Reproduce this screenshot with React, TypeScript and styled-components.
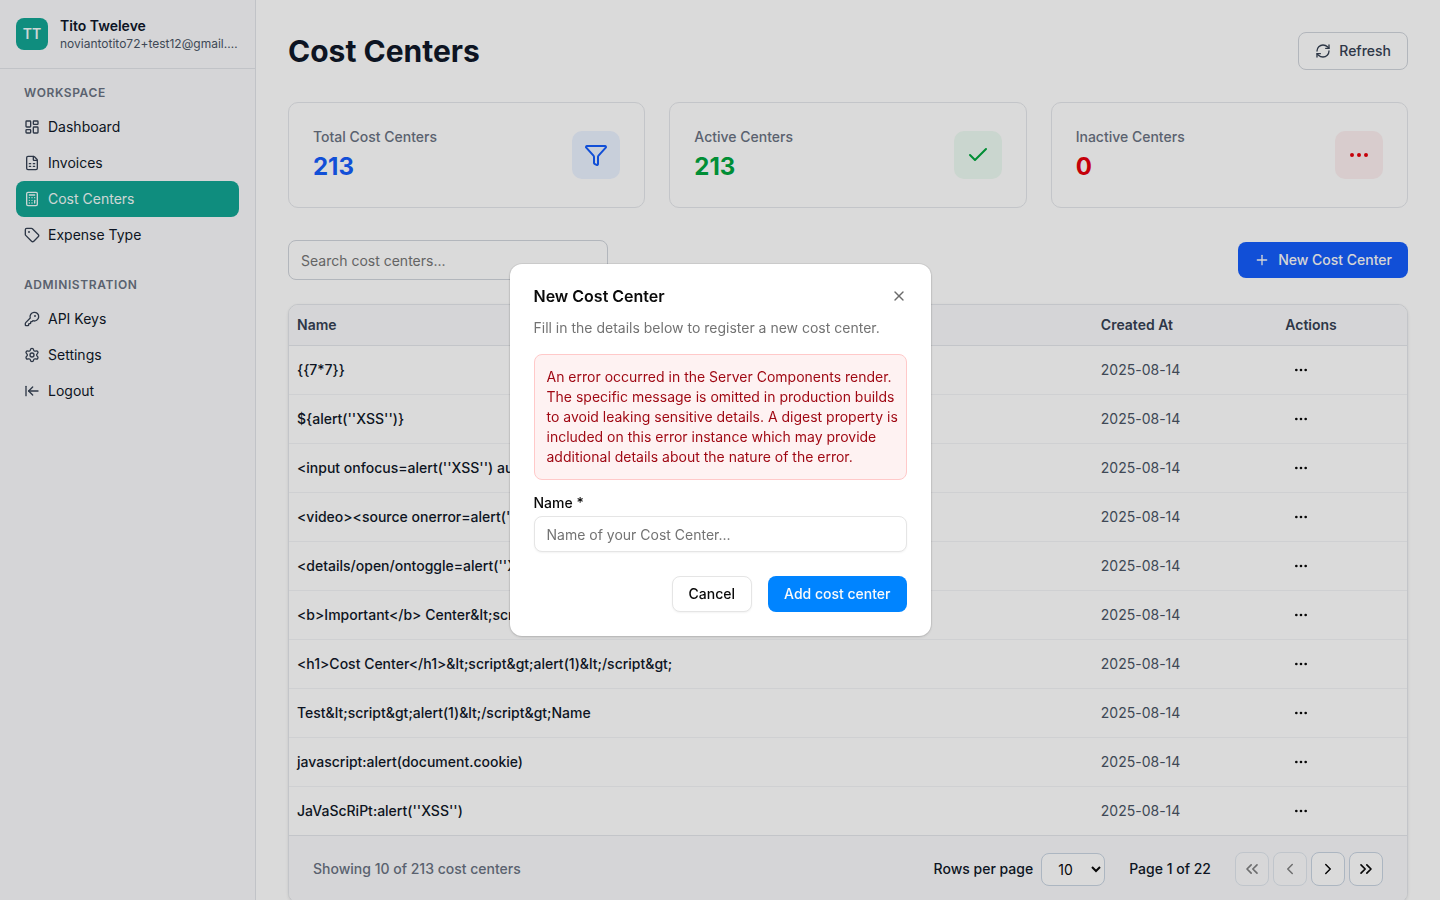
import React from "react";
import styled, { createGlobalStyle, css } from "styled-components";
import {
  ArrowLeftToLine,
  Calculator,
  Check,
  ChevronLeft,
  ChevronRight,
  ChevronsLeft,
  ChevronsRight,
  Ellipsis,
  FileSpreadsheet,
  Funnel,
  KeyRound,
  LayoutDashboard,
  Plus,
  RefreshCw,
  Settings,
  Tag,
  X,
} from "lucide-react";

const GlobalStyle = createGlobalStyle`
  *, *::before, *::after { box-sizing: border-box; }
  body {
    margin: 0;
    background: #fff;
    color: #0a0a0a;
    font-family: Inter, "Liberation Sans", sans-serif;
    font-feature-settings: "calt" 0;
    font-size: 14px;
    line-height: 20px;
    -webkit-font-smoothing: antialiased;
  }
  button, input, select { font: inherit; color: inherit; }
  button { cursor: pointer; }
  h1, h2, p, ul { margin: 0; padding: 0; }
  ul { list-style: none; }
  svg { flex-shrink: 0; display: block; }
`;

const Shell = styled.div`
  display: flex;
  height: 100vh;
  overflow: hidden;
`;

/* Sidebar */

const Sidebar = styled.aside`
  flex: 0 0 256px;
  min-width: 0;
  background: #f9fafc;
  border-right: 1px solid #e2e4e9;
`;

const Account = styled.div`
  display: flex;
  align-items: center;
  gap: 12px;
  padding: 16px;
  border-bottom: 1px solid #e2e4e9;
`;

const Avatar = styled.div`
  flex: 0 0 32px;
  height: 32px;
  display: grid;
  place-items: center;
  border-radius: 8px;
  background: #12a594;
  color: #f0fbf9;
  font-weight: 600;
`;

const AccountText = styled.div`
  min-width: 0;
`;

const AccountName = styled.p`
  color: #0f172b;
  font-weight: 600;
`;

const AccountEmail = styled.p`
  overflow: hidden;
  text-overflow: ellipsis;
  white-space: nowrap;
  color: #4a5565;
  font-size: 12px;
  line-height: 16px;
`;

const Nav = styled.nav`
  display: flex;
  flex-direction: column;
  gap: 24px;
  padding: 16px;
`;

const NavHeading = styled.h2`
  padding: 0 8px;
  margin-bottom: 8px;
  color: #6a7282;
  font-size: 12px;
  font-weight: 600;
  line-height: 16px;
  letter-spacing: 0.05em;
  text-transform: uppercase;
`;

const NavLink = styled.a<{ $active?: boolean }>`
  display: flex;
  align-items: center;
  gap: 8px;
  padding: 8px;
  border-radius: 8px;
  color: #101828;
  text-decoration: none;

  svg {
    color: #364153;
  }

  ${(p) =>
    p.$active &&
    css`
      background: #12a594;
      color: #f0fbf9;
      svg {
        color: #f0fbf9;
      }
    `}
`;

/* Page */

const Main = styled.main`
  flex: 1;
  min-width: 0;
  padding: 32px;
  overflow: hidden;
`;

const PageHeader = styled.header`
  display: flex;
  align-items: center;
  justify-content: space-between;
  margin-bottom: 32px;
`;

const PageTitle = styled.h1`
  color: #101828;
  font-size: 30px;
  line-height: 36px;
  font-weight: 700;
`;

const RefreshButton = styled.button`
  display: flex;
  align-items: center;
  gap: 8px;
  padding: 8px 16px;
  border: 1px solid #d1d5dc;
  border-radius: 8px;
  background: #fff;
  color: #364153;
  font-weight: 500;
`;

const Stats = styled.section`
  display: grid;
  grid-template-columns: repeat(3, 1fr);
  gap: 24px;
  margin-bottom: 32px;
`;

const StatCard = styled.div`
  display: flex;
  align-items: center;
  justify-content: space-between;
  padding: 24px;
  border: 1px solid #e5e7eb;
  border-radius: 10px;
  background: #fff;
`;

const StatLabel = styled.p`
  margin-bottom: 4px;
  color: #6a7282;
  font-weight: 500;
`;

const StatValue = styled.p<{ $color: string }>`
  color: ${(p) => p.$color};
  font-size: 24px;
  line-height: 32px;
  font-weight: 700;
`;

const StatIcon = styled.div<{ $color: string; $tint: string }>`
  display: grid;
  place-items: center;
  width: 48px;
  height: 48px;
  border-radius: 10px;
  background: ${(p) => p.$tint};
  color: ${(p) => p.$color};
`;

const Toolbar = styled.div`
  display: flex;
  align-items: center;
  justify-content: space-between;
  margin-bottom: 24px;
`;

const SearchInput = styled.input`
  width: 320px;
  height: 40px;
  padding: 0 12px;
  border: 1px solid #d1d5dc;
  border-radius: 8px;
  background: #fff;

  &::placeholder {
    color: #757575;
  }
`;

const NewButton = styled.button`
  display: flex;
  align-items: center;
  gap: 8px;
  height: 36px;
  padding: 0 16px;
  border: 0;
  border-radius: 8px;
  background: #155dfc;
  color: #fafafa;
  font-weight: 500;
`;

/* Table */

const TableCard = styled.section`
  overflow: hidden;
  border: 1px solid #e5e7eb;
  border-radius: 10px;
  background: #fff;
  box-shadow: 0 1px 3px rgba(0, 0, 0, 0.1);
`;

const Table = styled.table`
  width: 100%;
  table-layout: fixed;
  border-collapse: separate;
  border-spacing: 0;
`;

const HeadCell = styled.th<{ $width?: string }>`
  width: ${(p) => p.$width ?? "auto"};
  height: 41px;
  padding: 0 8px;
  border-bottom: 1px solid #e5e7eb;
  background: #f9fafc;
  color: #364153;
  font-weight: 600;
  text-align: left;
`;

const Cell = styled.td<{ $muted?: boolean }>`
  height: 49px;
  padding: 0 8px;
  border-bottom: 1px solid #f3f4f6;
  color: ${(p) => (p.$muted ? "#4a5565" : "#101828")};
  font-weight: ${(p) => (p.$muted ? 400 : 500)};
  white-space: nowrap;

  tr:last-child > & {
    border-bottom: 0;
    height: 48px;
  }
`;

const RowMenuButton = styled.button`
  display: grid;
  place-items: center;
  width: 32px;
  height: 32px;
  padding: 0;
  border: 0;
  border-radius: 6px;
  background: transparent;
  color: #0a0a0a;
`;

const TableFooter = styled.footer`
  display: flex;
  align-items: center;
  justify-content: space-between;
  padding: 16px 24px;
  border-top: 1px solid #e5e7eb;
  background: #f9fafc;
`;

const FooterNote = styled.p`
  color: #6a7282;
  font-weight: 500;
`;

const Pagination = styled.div`
  display: flex;
  align-items: center;
  gap: 24px;
  color: #101828;
  font-weight: 500;
`;

const RowsLabel = styled.label`
  display: flex;
  align-items: center;
  gap: 8px;
`;

const RowsSelect = styled.select`
  width: 64px;
  height: 33px;
  padding: 0 0 0 12px;
  border: 1px solid #cad5e2;
  border-radius: 8px;
  background: #fff;
  color: #0a0a0a;
  font-weight: 400;
`;

const PageButtons = styled.div`
  display: flex;
  gap: 4px;
`;

const PageButton = styled.button`
  display: grid;
  place-items: center;
  width: 34px;
  height: 34px;
  padding: 0;
  border: 1px solid #cad5e2;
  border-radius: 8px;
  background: #fff;
  color: #0a0a0a;

  &:disabled {
    opacity: 0.5;
  }
`;

/* Dialog */

const Overlay = styled.div`
  position: fixed;
  inset: 0;
  z-index: 10;
  display: flex;
  align-items: center;
  justify-content: center;
  background: rgba(0, 0, 0, 0.145);
`;

const Dialog = styled.div`
  width: 421px;
  padding: 24px;
  border-radius: 12px;
  background: #fff;
  box-shadow: 0 0 0 1px rgba(0, 0, 0, 0.06), 0 1px 3px rgba(0, 0, 0, 0.15);
`;

const DialogHeader = styled.div`
  display: flex;
  align-items: center;
  justify-content: space-between;
  margin-bottom: 14px;
`;

const DialogTitle = styled.h2`
  font-size: 16px;
  line-height: 16px;
  font-weight: 600;
`;

const CloseButton = styled.button`
  padding: 0;
  border: 0;
  background: none;
  color: #6b6b6b;
`;

const DialogText = styled.p`
  margin-bottom: 16px;
  color: #737373;
`;

const ErrorBox = styled.div`
  margin-bottom: 16px;
  padding: 12px 4px 12px 12px;
  border: 1px solid #ffc9c9;
  border-radius: 8px;
  background: #fef2f2;
  color: #9f0712;
`;

const Field = styled.label`
  display: flex;
  flex-direction: column;
  gap: 6px;
  margin-bottom: 24px;
  line-height: 14px;
  font-weight: 500;
`;

const FieldInput = styled.input`
  height: 36px;
  padding: 0 12px;
  border: 1px solid #e5e5e5;
  border-radius: 8px;
  background: #fff;
  box-shadow: 0 1px 2px rgba(0, 0, 0, 0.05);
  font-weight: 400;

  &::placeholder {
    color: #737373;
  }
`;

const DialogActions = styled.div`
  display: flex;
  justify-content: flex-end;
  gap: 16px;
`;

const DialogButton = styled.button<{ $primary?: boolean }>`
  height: 36px;
  padding: 0 16px;
  border: ${(p) => (p.$primary ? "0" : "1px solid #e5e5e5")};
  border-radius: 8px;
  background: ${(p) => (p.$primary ? "#0084ff" : "#fff")};
  color: ${(p) => (p.$primary ? "#fafafa" : "#0a0a0a")};
  box-shadow: ${(p) => (p.$primary ? "none" : "0 1px 2px rgba(0, 0, 0, 0.05)")};
  font-weight: 500;
`;

const navGroups = [
  {
    heading: "Workspace",
    links: [
      { label: "Dashboard", Icon: LayoutDashboard },
      { label: "Invoices", Icon: FileSpreadsheet },
      { label: "Cost Centers", Icon: Calculator, active: true },
      { label: "Expense Type", Icon: Tag },
    ],
  },
  {
    heading: "Administration",
    links: [
      { label: "API Keys", Icon: KeyRound },
      { label: "Settings", Icon: Settings },
      { label: "Logout", Icon: ArrowLeftToLine },
    ],
  },
];

const stats = [
  { label: "Total Cost Centers", value: 213, color: "#155dfc", tint: "#eaf2ff", Icon: Funnel },
  { label: "Active Centers", value: 213, color: "#00a63e", tint: "#edfbf2", Icon: Check },
  { label: "Inactive Centers", value: 0, color: "#e7000b", tint: "#fdeff0", Icon: Ellipsis },
];

const rows = [
  "{{7*7}}",
  "${alert(''XSS'')}",
  "<input onfocus=alert(''XSS'') au",
  "<video><source onerror=alert(''",
  "<details/open/ontoggle=alert(''X",
  "<b>Important</b> Center&lt;scr",
  "<h1>Cost Center</h1>&lt;script&gt;alert(1)&lt;/script&gt;",
  "Test&lt;script&gt;alert(1)&lt;/script&gt;Name",
  "javascript:alert(document.cookie)",
  "JaVaScRiPt:alert(''XSS'')",
];

export default function App() {
  return (
    <>
      <GlobalStyle />
      <Shell>
        <Sidebar>
          <Account>
            <Avatar>TT</Avatar>
            <AccountText>
              <AccountName>Tito Tweleve</AccountName>
              <AccountEmail>noviantotito72+test12@gmail.com</AccountEmail>
            </AccountText>
          </Account>
          <Nav>
            {navGroups.map((group) => (
              <div key={group.heading}>
                <NavHeading>{group.heading}</NavHeading>
                <ul>
                  {group.links.map(({ label, Icon, active }: any) => (
                    <li key={label}>
                      <NavLink href="#" $active={active} aria-current={active ? "page" : undefined}>
                        <Icon size={16} />
                        {label}
                      </NavLink>
                    </li>
                  ))}
                </ul>
              </div>
            ))}
          </Nav>
        </Sidebar>

        <Main>
          <PageHeader>
            <PageTitle>Cost Centers</PageTitle>
            <RefreshButton>
              <RefreshCw size={16} />
              Refresh
            </RefreshButton>
          </PageHeader>

          <Stats>
            {stats.map(({ label, value, color, tint, Icon }) => (
              <StatCard key={label}>
                <div>
                  <StatLabel>{label}</StatLabel>
                  <StatValue $color={color}>{value}</StatValue>
                </div>
                <StatIcon $color={color} $tint={tint}>
                  <Icon size={24} />
                </StatIcon>
              </StatCard>
            ))}
          </Stats>

          <Toolbar>
            <SearchInput type="text" aria-label="Search cost centers" placeholder="Search cost centers..." />
            <NewButton>
              <Plus size={16} />
              New Cost Center
            </NewButton>
          </Toolbar>

          <TableCard>
            <Table>
              <thead>
                <tr>
                  <HeadCell $width="71.9%">Name</HeadCell>
                  <HeadCell $width="16.5%">Created At</HeadCell>
                  <HeadCell>Actions</HeadCell>
                </tr>
              </thead>
              <tbody>
                {rows.map((name) => (
                  <tr key={name}>
                    <Cell>{name}</Cell>
                    <Cell $muted>2025-08-14</Cell>
                    <Cell>
                      <RowMenuButton aria-label="Row actions">
                        <Ellipsis size={16} />
                      </RowMenuButton>
                    </Cell>
                  </tr>
                ))}
              </tbody>
            </Table>
            <TableFooter>
              <FooterNote>Showing 10 of 213 cost centers</FooterNote>
              <Pagination>
                <RowsLabel>
                  Rows per page
                  <RowsSelect defaultValue="10">
                    <option>10</option>
                    <option>20</option>
                    <option>50</option>
                  </RowsSelect>
                </RowsLabel>
                <span>Page 1 of 22</span>
                <PageButtons>
                  <PageButton disabled aria-label="First page">
                    <ChevronsLeft size={20} />
                  </PageButton>
                  <PageButton disabled aria-label="Previous page">
                    <ChevronLeft size={18} />
                  </PageButton>
                  <PageButton aria-label="Next page">
                    <ChevronRight size={18} />
                  </PageButton>
                  <PageButton aria-label="Last page">
                    <ChevronsRight size={20} />
                  </PageButton>
                </PageButtons>
              </Pagination>
            </TableFooter>
          </TableCard>
        </Main>
      </Shell>

      <Overlay>
        <Dialog role="dialog" aria-modal="true" aria-labelledby="dialog-title">
          <DialogHeader>
            <DialogTitle id="dialog-title">New Cost Center</DialogTitle>
            <CloseButton aria-label="Close">
              <X size={16} />
            </CloseButton>
          </DialogHeader>
          <DialogText>Fill in the details below to register a new cost center.</DialogText>
          <ErrorBox role="alert">
            An error occurred in the Server Components render. The specific message is omitted in
            production builds to avoid leaking sensitive details. A digest property is included on
            this error instance which may provide additional details about the nature of the error.
          </ErrorBox>
          <Field>
            Name *
            <FieldInput type="text" placeholder="Name of your Cost Center..." />
          </Field>
          <DialogActions>
            <DialogButton>Cancel</DialogButton>
            <DialogButton $primary>Add cost center</DialogButton>
          </DialogActions>
        </Dialog>
      </Overlay>
    </>
  );
}
